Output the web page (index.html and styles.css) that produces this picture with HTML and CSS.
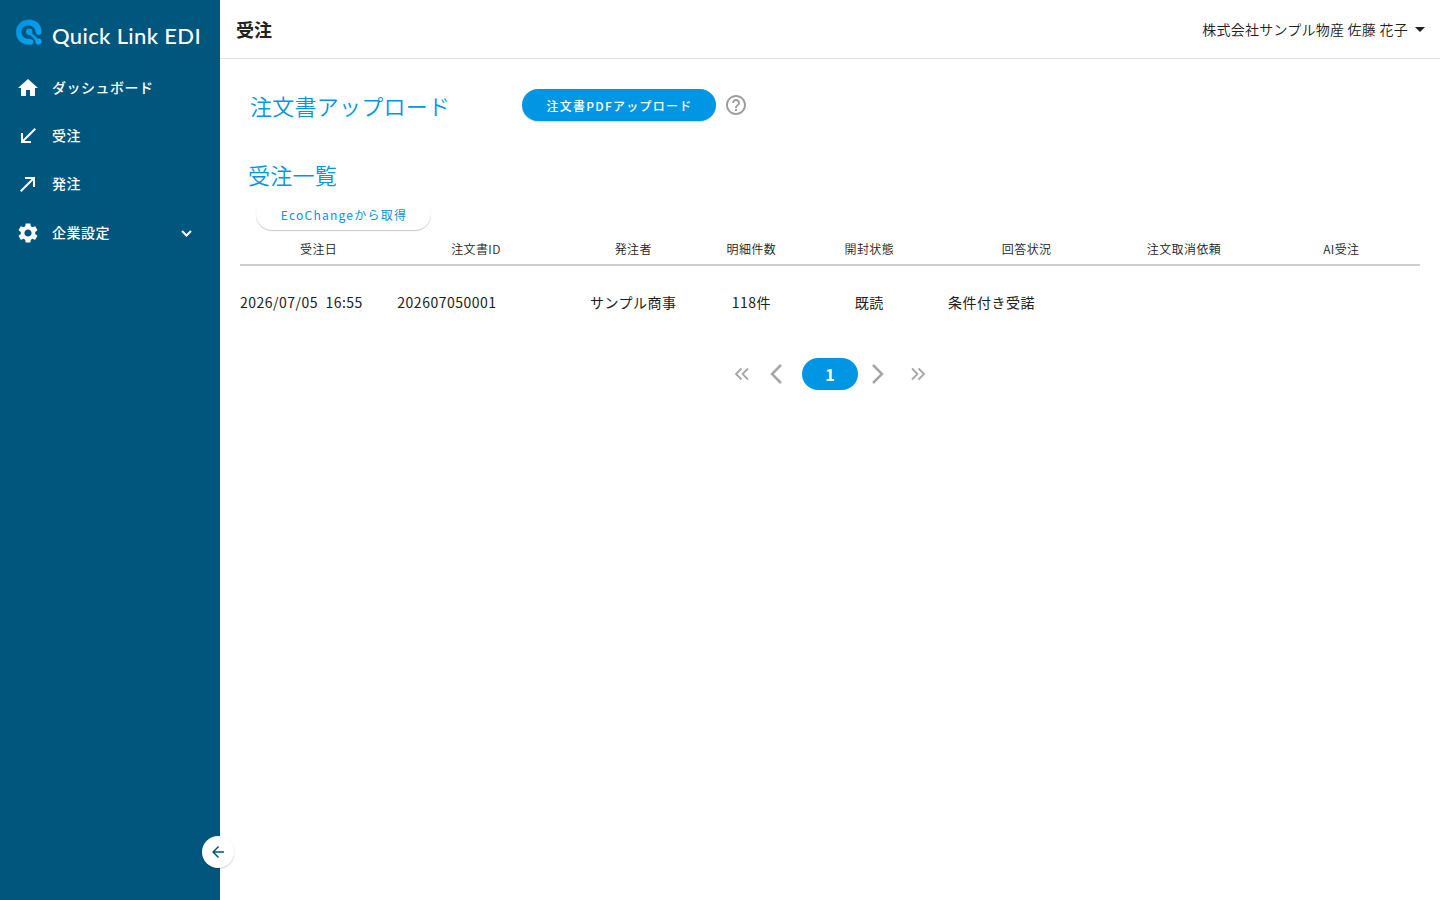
FILE: index.html
```
<!DOCTYPE html>
<html lang="ja">
<head>
    <meta charset="UTF-8">
    <meta name="viewport" content="width=device-width, initial-scale=1.0">
    <title>受注 | Quick Link EDI</title>
    <link rel="stylesheet" href="styles.css">
</head>
<body>
    <aside class="sidebar">
        <div class="logo">
            <svg class="logo-mark" width="26" height="26" viewBox="0 0 26 26">
                <defs>
                    <linearGradient id="mark" gradientUnits="userSpaceOnUse" x1="0" y1="0" x2="26" y2="26">
                        <stop offset="0" stop-color="#0090e0"/>
                        <stop offset="1" stop-color="#08a8f4"/>
                    </linearGradient>
                </defs>
                <path fill="url(#mark)" d="M13 .5C5.500 .5 0 6 0 13C0 20 5 25.500 12 25.500H15C18 25.500 18.500 21.500 15.500 20.500L13.500 20C8.500 20 5.500 17 5.500 13C5.500 9 8.500 6.500 12.500 6.500C16.500 6.500 19 9 19.500 12.500C20 15.500 22 16.500 23.800 15.800C25 15.200 25.500 13.500 25.500 12C25.300 5.500 20 .5 13 .5Z"/>
                <path stroke="url(#mark)" stroke-width="2.600" d="M13 13L22.500 22.500"/>
                <circle cx="13.200" cy="12.800" r="3.300" fill="url(#mark)"/>
                <circle cx="22.400" cy="22.500" r="3.100" fill="url(#mark)"/>
            </svg>
            <span class="logo-text">Quick Link EDI</span>
        </div>
        <nav class="menu">
            <a class="menu-item">
                <svg width="24" height="24" viewBox="0 0 24 24"><path d="M10 20v-6h4v6h5v-8h3L12 3 2 12h3v8z"/></svg>
                <span>ダッシュボード</span>
            </a>
            <a class="menu-item">
                <svg width="24" height="24" viewBox="0 0 24 24"><path d="M20 5.410 18.590 4 7 15.590V9H5v10h10v-2H8.410z"/></svg>
                <span>受注</span>
            </a>
            <a class="menu-item">
                <svg width="24" height="24" viewBox="0 0 24 24"><path d="M9 5v2h6.590L4 18.590 5.410 20 17 8.410V15h2V5z"/></svg>
                <span>発注</span>
            </a>
            <a class="menu-item menu-group">
                <svg width="24" height="24" viewBox="0 0 24 24"><path d="M19.140 12.940c.04-.3.060-.61.060-.94 0-.32-.02-.64-.07-.94l2.030-1.580c.18-.14.230-.41.120-.61l-1.920-3.320c-.12-.22-.37-.29-.59-.22l-2.390.96c-.5-.38-1.030-.7-1.620-.94l-.36-2.540c-.04-.24-.24-.41-.48-.41h-3.840c-.24 0-.43.17-.47.41l-.36 2.540c-.59.24-1.130.57-1.620.94l-2.390-.96c-.22-.08-.47 0-.59.22L2.740 8.870c-.12.21-.08.47.12.61l2.030 1.580c-.05.3-.09.63-.09.94s.02.64.07.94l-2.030 1.580c-.18.14-.23.41-.12.61l1.920 3.320c.12.22.37.29.59.22l2.390-.96c.5.38 1.030.7 1.620.94l.36 2.540c.05.24.24.41.48.41h3.840c.24 0 .44-.17.47-.41l.36-2.540c.59-.24 1.130-.56 1.620-.94l2.390.96c.22.08.47 0 .59-.22l1.920-3.320c.12-.22.07-.47-.12-.61zM12 15.600c-1.980 0-3.600-1.620-3.600-3.600s1.620-3.600 3.600-3.600 3.600 1.620 3.600 3.600-1.620 3.600-3.600 3.600"/></svg>
                <span>企業設定</span>
                <svg class="chevron" width="12" height="12" viewBox="0 0 12 12"><path d="m2 4 4.500 4.500L11 4"/></svg>
            </a>
        </nav>
        <button class="collapse">
            <svg width="18" height="18" viewBox="0 0 24 24"><path d="M20 11H7.830l5.590-5.590L12 4l-8 8 8 8 1.410-1.410L7.830 13H20z"/></svg>
        </button>
    </aside>

    <div class="content">
        <header class="topbar">
            <h1>受注</h1>
            <div class="user">
                <span>株式会社サンプル物産 佐藤 花子</span>
                <svg width="24" height="24" viewBox="0 0 24 24"><path d="m7 10 5 5 5-5z"/></svg>
            </div>
        </header>

        <main>
            <section class="upload">
                <h2>注文書アップロード</h2>
                <button class="btn btn-primary">注文書PDFアップロード</button>
                <svg class="help" width="24" height="24" viewBox="0 0 24 24"><path d="M11 18h2v-2h-2zm1-16C6.480 2 2 6.480 2 12s4.480 10 10 10 10-4.480 10-10S17.520 2 12 2m0 18c-4.410 0-8-3.590-8-8s3.590-8 8-8 8 3.590 8 8-3.590 8-8 8m0-14c-2.210 0-4 1.790-4 4h2c0-1.100.9-2 2-2s2 .9 2 2c0 2-3 1.750-3 5h2c0-2.250 3-2.500 3-5 0-2.210-1.790-4-4-4"/></svg>
            </section>

            <section class="orders">
                <h2>受注一覧</h2>
                <button class="btn btn-light">EcoChangeから取得</button>
                <div class="grid-row grid-head">
                    <div>受注日</div>
                    <div>注文書ID</div>
                    <div>発注者</div>
                    <div>明細件数</div>
                    <div>開封状態</div>
                    <div>回答状況</div>
                    <div>注文取消依頼</div>
                    <div>AI受注</div>
                </div>
                <div class="grid-row grid-body">
                    <div class="left">2026/07/05&nbsp; 16:55</div>
                    <div class="left">202607050001</div>
                    <div>サンプル商事</div>
                    <div>118件</div>
                    <div>既読</div>
                    <div class="left">条件付き受諾</div>
                    <div></div>
                    <div></div>
                </div>
            </section>

            <div class="pager">
                <svg width="24" height="24" viewBox="0 0 24 24"><path d="M11.500 6.500 6 12l5.500 5.500M18 6.500 12.500 12l5.500 5.500"/></svg>
                <svg class="big" width="24" height="24" viewBox="0 0 24 24"><path d="M17 3 8 12l9 9"/></svg>
                <span class="page">1</span>
                <svg class="big" width="24" height="24" viewBox="0 0 24 24"><path d="m1 3 9 9-9 9"/></svg>
                <svg width="24" height="24" viewBox="0 0 24 24"><path d="m6 6.500 5.500 5.500L6 17.500M12.500 6.500l5.500 5.500-5.500 5.500"/></svg>
            </div>
        </main>
    </div>
</body>
</html>
```
FILE: styles.css
```
* {
    box-sizing: border-box;
    margin: 0;
    padding: 0;
}
body {
    display: flex;
    height: 100vh;
    overflow: hidden;
    font-family: "Noto Sans CJK JP", sans-serif;
    font-size: 14px;
    font-weight: 400;
    color: #212121;
    background: #fff;
}
button {
    border: none;
    font-family: inherit;
    cursor: pointer;
}

/* sidebar */
.sidebar {
    position: relative;
    flex: 0 0 220px;
    background: #00567d;
    color: #fff;
    fill: #fff;
}
.logo {
    display: flex;
    height: 64px;
    padding: 19px 0 0 16px;
}
.logo-text {
    margin: 3px 0 0 10px;
    font-family: Lato, sans-serif;
    font-size: 22px;
    font-weight: 500;
    line-height: 28px;
    letter-spacing: 0.35px;
    white-space: nowrap;
}
.menu-item {
    display: flex;
    align-items: center;
    height: 48px;
    padding: 0 28px 0 16px;
    font-weight: 500;
    letter-spacing: 0.5px;
}
.menu-item span {
    margin-left: 12px;
    padding-bottom: 2px;
}
.menu-group {
    height: 50px;
}
.chevron {
    margin-left: auto;
    fill: none;
    stroke: #fff;
    stroke-width: 2;
}
.collapse {
    position: absolute;
    right: -14px;
    bottom: 32px;
    display: flex;
    align-items: center;
    justify-content: center;
    width: 32px;
    height: 32px;
    border-radius: 50%;
    background: #fff;
    fill: #00567d;
    box-shadow: 0 1px 2px rgba(0, 0, 0, 0.2);
}

/* header */
.content {
    flex: 1;
}
.topbar {
    display: flex;
    align-items: center;
    justify-content: space-between;
    height: 59px;
    padding: 0 8px 0 16px;
    border-bottom: 1px solid #e0e0e0;
}
.topbar h1 {
    font-size: 18px;
    font-weight: 700;
}
.user {
    display: flex;
    align-items: center;
    font-weight: 350;
    letter-spacing: 0.25px;
    fill: #212121;
}
.user span {
    padding-bottom: 1px;
}

/* main */
main {
    padding: 30px 20px 0;
}
h2 {
    font-size: 22px;
    font-weight: 350;
    line-height: 32px;
    letter-spacing: 0.25px;
    color: #0096e3;
}
.upload {
    display: flex;
    align-items: center;
    height: 32px;
    padding-left: 10px;
}
.upload h2 {
    width: 272px;
}
.btn {
    height: 32px;
    border-radius: 16px;
    font-size: 12px;
    letter-spacing: 1.25px;
    white-space: nowrap;
}
.btn-primary {
    width: 194px;
    padding-left: 1px;
    font-weight: 500;
    color: #fff;
    background: #0096e3;
    box-shadow: 0 1px 1px rgba(0, 0, 0, 0.15);
}
.help {
    margin-left: 8px;
    fill: #9e9e9e;
}
.orders {
    margin-top: 37px;
}
.orders h2 {
    padding-left: 8px;
}
.btn-light {
    display: block;
    width: 175px;
    margin: 8px 0 0 16px;
    padding-left: 1px;
    font-weight: 400;
    color: #0096e3;
    background: #fff;
    box-shadow: 0 1px 1px rgba(0, 0, 0, 0.22);
}
.grid-row {
    display: grid;
    grid-template-columns: 2fr 2fr 2fr 1fr 2fr 2fr 2fr 2fr;
    align-items: center;
    text-align: center;
}
.grid-head {
    height: 36px;
    padding-top: 2px;
    border-bottom: 2px solid #cecece;
    font-size: 12px;
    font-weight: 350;
    letter-spacing: 0.4px;
}
.grid-body {
    height: 74px;
    padding-bottom: 2px;
    letter-spacing: 0.5px;
}
.left {
    text-align: left;
}

/* pager */
.pager {
    display: flex;
    align-items: center;
    justify-content: center;
    height: 32px;
    margin-top: 18px;
    fill: none;
    stroke: #a6a6a6;
    stroke-width: 1.8;
}
.pager .big {
    margin: 0 10px;
    stroke-width: 2.5;
}
.page {
    width: 56px;
    margin: 0 4px;
    border-radius: 16px;
    background: #0096e3;
    color: #fff;
    font-size: 16px;
    font-weight: 700;
    line-height: 32px;
    text-align: center;
}
```
